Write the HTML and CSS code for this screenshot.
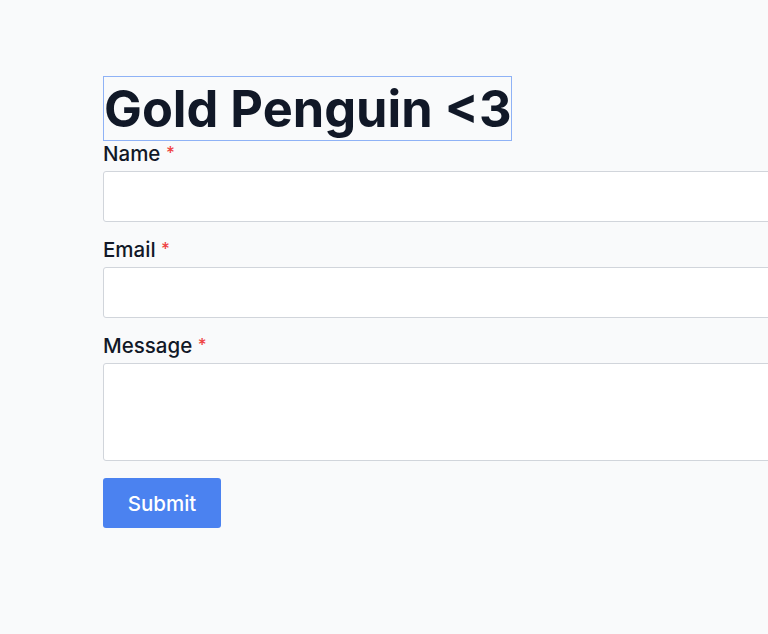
FILE: index.html
```html
<!DOCTYPE html>
<html lang="en">
<head>
    <meta charset="UTF-8">
    <meta name="viewport" content="width=device-width, initial-scale=1.0">
    <title>Gold Penguin</title>
    <link rel="stylesheet" href="styles.css">
</head>
<body>
    <div class="page">
        <h1 class="title">Gold Penguin &lt;3</h1>

        <form id="contactForm" class="contact-form">
            <div class="field">
                <label for="name">Name <span class="req">*</span></label>
                <input type="text" id="name" name="name" required>
            </div>

            <div class="field">
                <label for="email">Email <span class="req">*</span></label>
                <input type="email" id="email" name="email" required>
            </div>

            <div class="field">
                <label for="message">Message <span class="req">*</span></label>
                <textarea id="message" name="message" required></textarea>
            </div>

            <button type="submit">Submit</button>
        </form>
    </div>
</body>
</html>
```

FILE: styles.css
```css
body {
    margin: 0;
    background-color: #f9fafb;
    font-family: Inter, "Liberation Sans", sans-serif;
    color: #111827;
}

.page {
    padding: 76px 0 0 103px;
    overflow: hidden;
    min-height: 558px;
}

.title {
    display: inline-block;
    margin: 0;
    font-size: 50.5px;
    font-weight: 700;
    line-height: 63px;
    border: 1px solid #8fb2f6;
}

.contact-form {
    display: flex;
    flex-direction: column;
    gap: 16px;
    width: 720px;
    margin-top: 1px;
}

.field {
    display: flex;
    flex-direction: column;
}

label {
    font-size: 20.5px;
    font-weight: 500;
    line-height: 24px;
    margin-bottom: 5px;
}

.req {
    color: #ef4444;
    font-size: 17px;
    line-height: 0;
    vertical-align: 2px;
}

input,
textarea {
    box-sizing: border-box;
    height: 51px;
    padding: 8px 12px;
    border: 1px solid #d1d5db;
    border-radius: 3px;
    background: #fff;
    font: inherit;
}

textarea {
    height: 98px;
    resize: none;
}

button {
    align-self: flex-start;
    width: 118px;
    height: 50px;
    margin-top: 1px;
    background-color: #4b82f0;
    color: #fff;
    border: none;
    border-radius: 3px;
    font-family: inherit;
    font-size: 20.5px;
    font-weight: 500;
    cursor: pointer;
}
```
